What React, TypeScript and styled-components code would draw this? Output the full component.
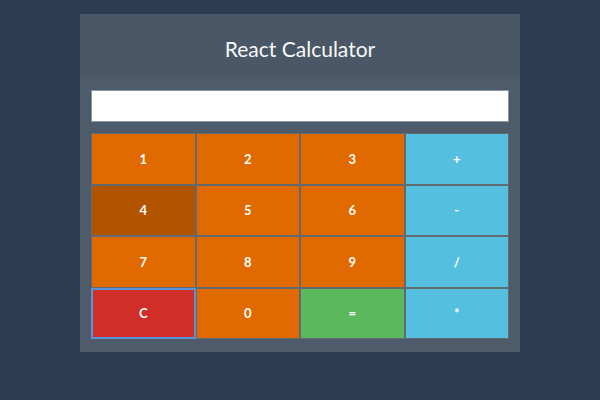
import React from "react";
import styled, { createGlobalStyle } from "styled-components";

const Global = createGlobalStyle`
  html, body { margin: 0; padding: 0; background: #2c3d51; }
  body { font-family: Lato, "Open Sans", sans-serif; width: 600px; height: 400px; overflow: hidden; }
`;

const Page = styled.div`
  padding: 14px 80px 0 80px;
`;

const Card = styled.div`
  width: 440px;
  background: #4d5b6b;
`;

const Header = styled.div`
  height: 65px;
  background: #4a5767;
  display: flex;
  align-items: center;
  justify-content: center;
`;

const Title = styled.h1`
  margin: 0;
  font-family: Lato, sans-serif;
  font-weight: 400;
  font-size: 21px;
  color: #f6f8fa;
  padding-top: 4px;
`;

const Body = styled.div`
  padding: 11px 11px 13px 11px;
  display: flex;
  flex-direction: column;
  gap: 11px;
`;

const Display = styled.input`
  box-sizing: border-box;
  width: 418px;
  height: 32px;
  margin: 0;
  border: 1px solid #8a96a3;
  background: #ffffff;
  font-family: Lato, sans-serif;
  font-size: 16px;
  outline: none;
`;

const Grid = styled.div`
  display: grid;
  grid-template-columns: repeat(4, 1fr);
  grid-template-rows: repeat(4, 51.5px);
  width: 418px;
`;

type Kind = "num" | "op" | "eq" | "clear" | "hover";

const colors: Record<Kind, string> = {
  num: "#e16a00",
  op: "#55bfe0",
  eq: "#5cb85c",
  clear: "#d02e28",
  hover: "#b25300",
};

const Key = styled.button<{ $kind: Kind; $focus?: boolean }>`
  box-sizing: border-box;
  margin: 0;
  border: 1px solid ${(p) => (p.$focus ? "#5a93d8" : "#616a70")};
  box-shadow: ${(p) => (p.$focus ? "inset 0 0 0 1px #5a93d8" : "none")};
  background: ${(p) => colors[p.$kind]};
  color: #ffffff;
  font-family: Lato, sans-serif;
  font-weight: 700;
  font-size: 13px;
  display: flex;
  align-items: center;
  justify-content: center;
  padding: 0;
  cursor: pointer;
`;

const keys: { label: string; kind: Kind; focus?: boolean }[] = [
  { label: "1", kind: "num" },
  { label: "2", kind: "num" },
  { label: "3", kind: "num" },
  { label: "+", kind: "op" },
  { label: "4", kind: "hover" },
  { label: "5", kind: "num" },
  { label: "6", kind: "num" },
  { label: "-", kind: "op" },
  { label: "7", kind: "num" },
  { label: "8", kind: "num" },
  { label: "9", kind: "num" },
  { label: "/", kind: "op" },
  { label: "C", kind: "clear", focus: true },
  { label: "0", kind: "num" },
  { label: "=", kind: "eq" },
  { label: "*", kind: "op" },
];

export default function App() {
  return (
    <>
      <Global />
      <Page>
        <Card>
          <Header>
            <Title>React Calculator</Title>
          </Header>
          <Body>
            <Display type="text" readOnly value="" />
            <Grid>
              {keys.map((k) => (
                <Key key={k.label} $kind={k.kind} $focus={k.focus}>
                  {k.label}
                </Key>
              ))}
            </Grid>
          </Body>
        </Card>
      </Page>
    </>
  );
}
